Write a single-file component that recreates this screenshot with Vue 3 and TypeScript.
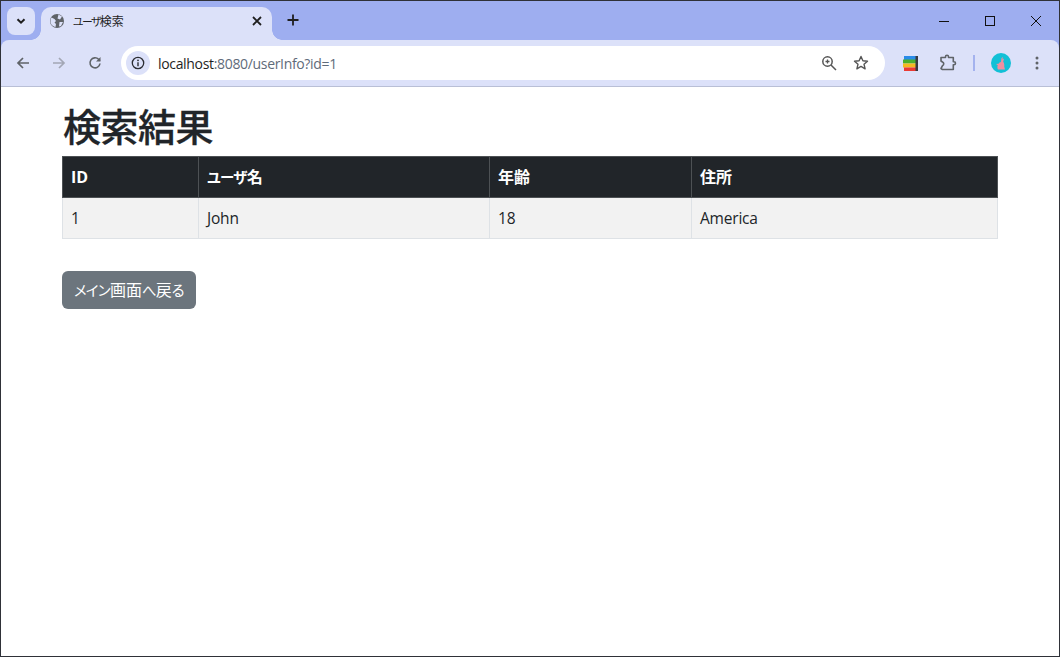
<script setup lang="ts">
interface Header { kana: string; text: string }
const headers: Header[] = [
  { kana: '', text: 'ID' },
  { kana: 'ユーザ', text: '名' },
  { kana: '', text: '年齢' },
  { kana: '', text: '住所' },
]
const row: string[] = ['1', 'John', '18', 'America']
</script>

<template>
  <div class="window">
    <div class="tabstrip">
      <button class="tabsearch" aria-label="tabs">
        <svg width="12" height="12" viewBox="0 0 12 12"><path d="M2.5 4.2 6 7.7l3.5-3.5" fill="none" stroke="#1f1f1f" stroke-width="2"/></svg>
      </button>
      <div class="tab">
        <svg class="globe" width="16" height="16" viewBox="0 0 16 16">
          <circle cx="8" cy="8" r="7" fill="#5f6368"/>
          <path d="M2.500 4.500 5.500 6l1.500 2-1.500 1.500L7 11l-.5 3C4 13.500 1.500 11.500 1.500 8.500c0-1.500.4-3 1-4ZM9.500 1.500 13 3.500 11 6.500 8.500 5.500ZM10.500 9h3.500L12 13l-2 .5Z" fill="#dce1f9"/>
        </svg>
        <span class="tabtitle"><span class="kana">ユーザ</span>検索</span>
        <svg class="tabclose" width="10" height="10" viewBox="0 0 10 10"><path d="M1 1l8 8M9 1l-8 8" stroke="#1f1f1f" stroke-width="1.800"/></svg>
      </div>
      <svg class="newtab" width="12" height="12" viewBox="0 0 12 12"><path d="M6 .5v11M.5 6h11" stroke="#1f1f1f" stroke-width="1.800"/></svg>
      <div class="winctrl">
        <svg width="10" height="10" viewBox="0 0 10 10"><path d="M0 5.500h10" stroke="#111" stroke-width="1"/></svg>
        <svg width="10" height="10" viewBox="0 0 10 10"><rect x=".5" y=".5" width="9" height="9" fill="none" stroke="#111"/></svg>
        <svg width="10" height="10" viewBox="0 0 10 10"><path d="M0 0l10 10M10 0 0 10" stroke="#111" stroke-width="1"/></svg>
      </div>
    </div>

    <div class="toolbar">
      <svg class="nav" width="16" height="16" viewBox="0 0 16 16"><path d="M14 8H3M8 3 3 8l5 5" fill="none" stroke="#5f6368" stroke-width="1.700"/></svg>
      <svg class="nav" width="16" height="16" viewBox="0 0 16 16"><path d="M2 8h11M8 3l5 5-5 5" fill="none" stroke="#a3a7b5" stroke-width="1.700"/></svg>
      <svg class="nav" width="16" height="16" viewBox="0 0 16 16"><path d="M13 8.500A5 5 0 1 1 11.600 4.300L13 5.700" fill="none" stroke="#5f6368" stroke-width="1.600"/><path d="M13.500 2v4.500H9z" fill="#5f6368"/></svg>
      <div class="omnibox">
        <span class="siteinfo">
          <svg width="14" height="14" viewBox="0 0 14 14"><circle cx="7" cy="7" r="5.700" fill="none" stroke="#2b2d33" stroke-width="1.300"/><path d="M7 6.200v4" stroke="#2b2d33" stroke-width="1.400"/><circle cx="7" cy="4.300" r=".9" fill="#2b2d33"/></svg>
        </span>
        <span class="url"><span class="host">localhost</span>:8080/userInfo?id=1</span>
        <svg class="omni-zoom" width="16" height="16" viewBox="0 0 16 16"><circle cx="6.500" cy="6.500" r="4.700" fill="none" stroke="#555" stroke-width="1.500"/><path d="M10 10l5 5" stroke="#555" stroke-width="1.500"/><path d="M4.500 6.500h4M6.500 4.500v4" stroke="#555" stroke-width="1.300"/></svg>
        <svg class="omni-star" width="16" height="16" viewBox="0 0 16 16"><path d="M8 1.500l1.900 4.300 4.600.4-3.500 3 1.100 4.600L8 11.400l-4.100 2.400L5 9.200l-3.500-3 4.600-.4z" fill="none" stroke="#555" stroke-width="1.400" stroke-linejoin="round"/></svg>
      </div>
      <div class="tools">
        <svg class="ext1" width="16" height="15" viewBox="0 0 16 15">
          <rect x="1" y="0" width="12" height="4" fill="#2a8be8"/>
          <rect x="0" y="3.500" width="13" height="4" fill="#4caf2c"/>
          <rect x="0" y="7.500" width="13" height="4" fill="#f5b91e"/>
          <rect x="1" y="11.500" width="12" height="3.500" fill="#ea3a34"/>
          <rect x="12.500" y="0" width="2.500" height="15" fill="#37393f"/>
        </svg>
        <svg class="puzzle" width="18" height="18" viewBox="0 0 18 18"><path d="M2 3.500h4.500V2.800a1.500 1.500 0 0 1 3 0v.7h4.800v4.200h.7a1.500 1.500 0 0 1 0 3h-.7V15.500H3.500L2 14.500l1.500-2.800a2 2 0 0 0 0-3.700L2 7z" fill="none" stroke="#5f6368" stroke-width="1.600" stroke-linejoin="round"/></svg>
        <span class="divider"></span>
        <svg class="avatar" width="20" height="20" viewBox="0 0 20 20">
          <circle cx="10" cy="10" r="10" fill="#12c0d6"/>
          <path d="M7 16.500c-.8-1.500-.8-3-.2-4.300L5 11l2.500-.3c.7-1 1.500-1.500 2.500-1.700L10.500 5l1.300-1-.3 2.500L13 5.500l-.8 3.300c1 1.200 1.300 3 1 4.700l.8 3z" fill="#f08fa0"/>
        </svg>
        <svg class="kebab" width="4" height="14" viewBox="0 0 4 14"><circle cx="2" cy="2" r="1.500" fill="#5f6368"/><circle cx="2" cy="7" r="1.500" fill="#5f6368"/><circle cx="2" cy="12" r="1.500" fill="#5f6368"/></svg>
      </div>
    </div>

    <main class="page">
      <h1>検索結果</h1>
      <table>
        <colgroup>
          <col class="c1" /><col class="c2" /><col class="c3" /><col class="c4" />
        </colgroup>
        <thead>
          <tr><th v-for="h in headers" :key="h.text"><span class="kana">{{ h.kana }}</span>{{ h.text }}</th></tr>
        </thead>
        <tbody>
          <tr><td v-for="c in row" :key="c">{{ c }}</td></tr>
        </tbody>
      </table>
      <a class="btn"><span class="kana">メイン</span>画面<span class="kana">へ</span>戻<span class="kana">る</span></a>
    </main>
  </div>
</template>

<style>
html, body { margin: 0; background: #fff; overflow: hidden; }
</style>

<style scoped>
.window {
  box-sizing: border-box;
  width: 1060px;
  height: 657px;
  border: 1px solid #2f3138;
  display: flex;
  flex-direction: column;
  font-family: "Open Sans", "Noto Sans CJK JP", sans-serif;
  color: #212529;
  background: #9eaef0;
  overflow: hidden;
  font-feature-settings: "palt";
}
.kana {
  font-size: .9em;
  letter-spacing: -.05em;
  line-height: 0;
}
.tabstrip {
  height: 39px;
  background: #9eaef0;
  display: flex;
  align-items: center;
  position: relative;
  flex: none;
}
.tabsearch {
  width: 28px;
  height: 28px;
  margin: 0 6px 0 6px;
  border: 0;
  padding: 0;
  border-radius: 8px;
  background: #dce1f9;
  display: flex;
  align-items: center;
  justify-content: center;
}
.tab {
  box-sizing: border-box;
  width: 231px;
  height: 33px;
  margin-top: 6px;
  background: #dce1f9;
  border-radius: 10px 10px 0 0;
  display: flex;
  align-items: center;
  padding: 0 10px 0 8px;
  position: relative;
}
.tab::before,
.tab::after {
  content: "";
  position: absolute;
  bottom: 0;
  width: 10px;
  height: 10px;
}
.tab::before {
  right: 100%;
  background: radial-gradient(circle at 0 0, transparent 9.500px, #dce1f9 10px);
}
.tab::after {
  left: 100%;
  background: radial-gradient(circle at 100% 0, transparent 9.500px, #dce1f9 10px);
}
.tab > * { position: relative; top: -3px; }
.globe { flex: none; }
.tabtitle {
  margin-left: 8px;
  flex: 1;
  font-size: 12px;
  color: #1f1f1f;
  font-family: "Noto Sans CJK JP", sans-serif;
}
.tabtitle .kana { letter-spacing: -.14em; }
.newtab { margin-left: 15px; margin-top: -1px; }
.winctrl {
  margin-left: auto;
  display: flex;
  gap: 36px;
  padding-right: 18px;
  align-items: center;
}
.toolbar {
  height: 46px;
  background: #dce1f9;
  border-bottom: 1px solid #b9bfd6;
  border-radius: 8px 8px 0 0;
  display: flex;
  align-items: center;
  flex: none;
  box-sizing: content-box;
  padding-left: 14px;
}
.nav { margin-right: 20px; flex: none; }
.omnibox {
  width: 764px;
  height: 34px;
  margin-left: -2px;
  background: #fff;
  border-radius: 17px;
  display: flex;
  align-items: center;
  padding: 0 16px 0 5px;
  box-sizing: border-box;
  flex: none;
}
.siteinfo {
  width: 24px;
  height: 24px;
  border-radius: 50%;
  background: #dce1f9;
  display: flex;
  align-items: center;
  justify-content: center;
}
.url {
  margin-left: 8px;
  flex: 1;
  font-size: 14px;
  color: #5f6b7a;
  font-family: "Open Sans", sans-serif;
  letter-spacing: -.33px;
}
.host { color: #1f1f1f; }
.omni-zoom { margin-right: 16px; }
.tools {
  display: flex;
  align-items: center;
  margin-left: 18px;
}
.puzzle { margin-left: 20px; }
.divider {
  width: 2px;
  height: 16px;
  background: #a4b2ee;
  margin-left: 16px;
}
.avatar { margin-left: 16px; }
.kebab { margin-left: 24px; }
.page {
  padding: 14px 61px 0;
  flex: 1;
  background: #fff;
}
h1 {
  margin: 0 0 7px;
  font-size: 38px;
  line-height: 48px;
  font-weight: 500;
  font-family: "Noto Sans CJK JP", sans-serif;
  letter-spacing: -.5px;
  padding-left: 1px;
  color: #212529;
  font-feature-settings: normal;
  -webkit-text-stroke: .3px #212529;
}
table {
  width: 935px;
  border-collapse: collapse;
  table-layout: fixed;
  font-size: 15.500px;
}
.c1 { width: 136px; }
.c2 { width: 291px; }
.c3 { width: 202px; }
.c4 { width: 306px; }
th, td {
  padding: 8px;
  text-align: left;
  line-height: 24px;
  border: 1px solid #dee2e6;
  font-family: "Open Sans", "Noto Sans CJK JP", sans-serif;
}
th {
  background: #212529;
  color: #fff;
  font-weight: 700;
  border-color: #4d5154;
  font-size: 16px;
}
td {
  background: #f2f2f2;
  color: #212529;
  letter-spacing: -.2px;
}
.btn {
  display: inline-block;
  margin-top: 32px;
  padding: 6px 12px 8px;
  background: #6c757d;
  color: #fff;
  border-radius: 6px;
  font-size: 16px;
  line-height: 24px;
  font-family: "Noto Sans CJK JP", sans-serif;
}
</style>
